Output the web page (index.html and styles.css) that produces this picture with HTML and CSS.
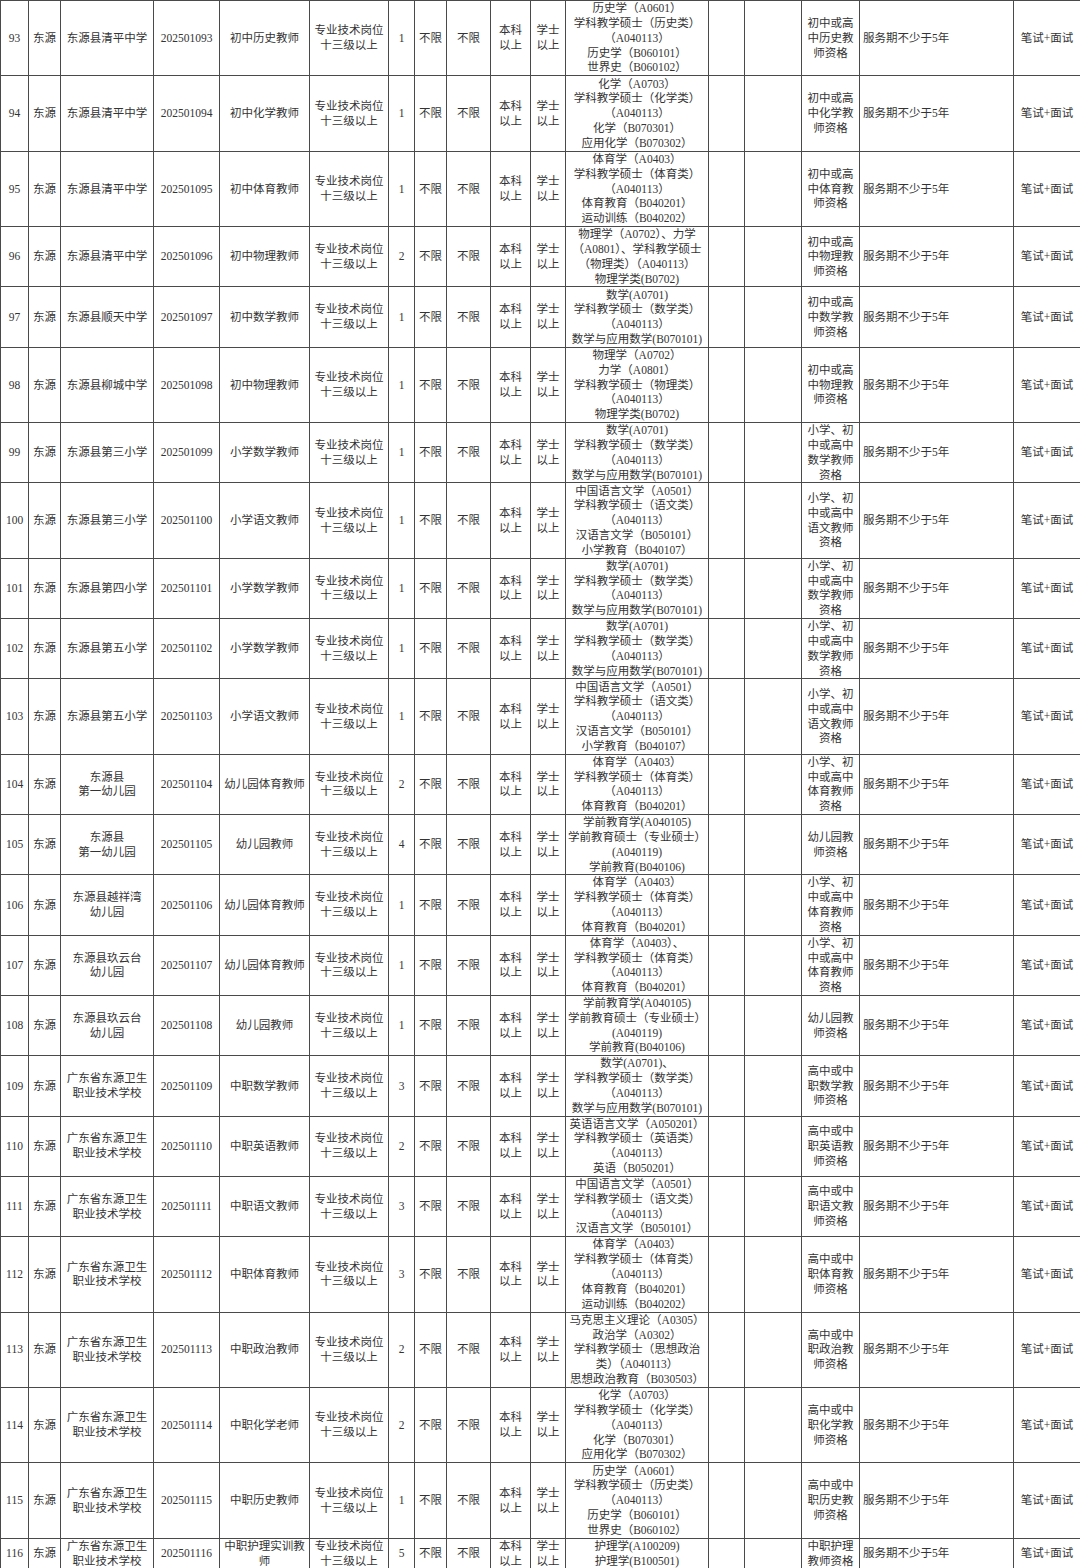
FILE: index.html
```html
<!DOCTYPE html>
<html lang="zh-CN">
<head>
<meta charset="utf-8">
<title>岗位表</title>
<link rel="stylesheet" href="styles.css">
</head>
<body>
<table class="jobs">
<colgroup>
<col class="c-no"><col class="c-area"><col class="c-unit"><col class="c-code"><col class="c-name"><col class="c-type"><col class="c-num"><col class="c-age"><col class="c-sex"><col class="c-edu"><col class="c-deg"><col class="c-major"><col class="c-e1"><col class="c-e2"><col class="c-qual"><col class="c-other"><col class="c-exam">
</colgroup>
<tbody>
<tr class="r5"><td>93</td><td>东源</td><td>东源县清平中学</td><td>202501093</td><td>初中历史教师</td><td>专业技术岗位<br>十三级以上</td><td>1</td><td>不限</td><td>不限</td><td>本科<br>以上</td><td>学士<br>以上</td><td class="major">历史学（A0601）<br>学科教学硕士（历史类）<br>（A040113）<br>历史学（B060101）<br>世界史（B060102）</td><td></td><td></td><td>初中或高<br>中历史教<br>师资格</td><td class="svc">服务期不少于5年</td><td>笔试+面试</td></tr>
<tr class="r5"><td>94</td><td>东源</td><td>东源县清平中学</td><td>202501094</td><td>初中化学教师</td><td>专业技术岗位<br>十三级以上</td><td>1</td><td>不限</td><td>不限</td><td>本科<br>以上</td><td>学士<br>以上</td><td class="major">化学（A0703）<br>学科教学硕士（化学类）<br>（A040113）<br>化学（B070301）<br>应用化学（B070302）</td><td></td><td></td><td>初中或高<br>中化学教<br>师资格</td><td class="svc">服务期不少于5年</td><td>笔试+面试</td></tr>
<tr class="r5"><td>95</td><td>东源</td><td>东源县清平中学</td><td>202501095</td><td>初中体育教师</td><td>专业技术岗位<br>十三级以上</td><td>1</td><td>不限</td><td>不限</td><td>本科<br>以上</td><td>学士<br>以上</td><td class="major">体育学（A0403）<br>学科教学硕士（体育类）<br>（A040113）<br>体育教育（B040201）<br>运动训练（B040202）</td><td></td><td></td><td>初中或高<br>中体育教<br>师资格</td><td class="svc">服务期不少于5年</td><td>笔试+面试</td></tr>
<tr class="r4"><td>96</td><td>东源</td><td>东源县清平中学</td><td>202501096</td><td>初中物理教师</td><td>专业技术岗位<br>十三级以上</td><td>2</td><td>不限</td><td>不限</td><td>本科<br>以上</td><td>学士<br>以上</td><td class="major">物理学（A0702）、力学<br>（A0801）、学科教学硕士<br>（物理类）（A040113）<br>物理学类(B0702)</td><td></td><td></td><td>初中或高<br>中物理教<br>师资格</td><td class="svc">服务期不少于5年</td><td>笔试+面试</td></tr>
<tr class="r4"><td>97</td><td>东源</td><td>东源县顺天中学</td><td>202501097</td><td>初中数学教师</td><td>专业技术岗位<br>十三级以上</td><td>1</td><td>不限</td><td>不限</td><td>本科<br>以上</td><td>学士<br>以上</td><td class="major">数学(A0701)<br>学科教学硕士（数学类）<br>（A040113）<br>数学与应用数学(B070101)</td><td></td><td></td><td>初中或高<br>中数学教<br>师资格</td><td class="svc">服务期不少于5年</td><td>笔试+面试</td></tr>
<tr class="r5"><td>98</td><td>东源</td><td>东源县柳城中学</td><td>202501098</td><td>初中物理教师</td><td>专业技术岗位<br>十三级以上</td><td>1</td><td>不限</td><td>不限</td><td>本科<br>以上</td><td>学士<br>以上</td><td class="major">物理学（A0702）<br>力学（A0801）<br>学科教学硕士（物理类）<br>（A040113）<br>物理学类(B0702)</td><td></td><td></td><td>初中或高<br>中物理教<br>师资格</td><td class="svc">服务期不少于5年</td><td>笔试+面试</td></tr>
<tr class="r4"><td>99</td><td>东源</td><td>东源县第三小学</td><td>202501099</td><td>小学数学教师</td><td>专业技术岗位<br>十三级以上</td><td>1</td><td>不限</td><td>不限</td><td>本科<br>以上</td><td>学士<br>以上</td><td class="major">数学(A0701)<br>学科教学硕士（数学类）<br>（A040113）<br>数学与应用数学(B070101)</td><td></td><td></td><td>小学、初<br>中或高中<br>数学教师<br>资格</td><td class="svc">服务期不少于5年</td><td>笔试+面试</td></tr>
<tr class="r5"><td>100</td><td>东源</td><td>东源县第三小学</td><td>202501100</td><td>小学语文教师</td><td>专业技术岗位<br>十三级以上</td><td>1</td><td>不限</td><td>不限</td><td>本科<br>以上</td><td>学士<br>以上</td><td class="major">中国语言文学（A0501）<br>学科教学硕士（语文类）<br>（A040113）<br>汉语言文学（B050101）<br>小学教育（B040107）</td><td></td><td></td><td>小学、初<br>中或高中<br>语文教师<br>资格</td><td class="svc">服务期不少于5年</td><td>笔试+面试</td></tr>
<tr class="r4"><td>101</td><td>东源</td><td>东源县第四小学</td><td>202501101</td><td>小学数学教师</td><td>专业技术岗位<br>十三级以上</td><td>1</td><td>不限</td><td>不限</td><td>本科<br>以上</td><td>学士<br>以上</td><td class="major">数学(A0701)<br>学科教学硕士（数学类）<br>（A040113）<br>数学与应用数学(B070101)</td><td></td><td></td><td>小学、初<br>中或高中<br>数学教师<br>资格</td><td class="svc">服务期不少于5年</td><td>笔试+面试</td></tr>
<tr class="r4"><td>102</td><td>东源</td><td>东源县第五小学</td><td>202501102</td><td>小学数学教师</td><td>专业技术岗位<br>十三级以上</td><td>1</td><td>不限</td><td>不限</td><td>本科<br>以上</td><td>学士<br>以上</td><td class="major">数学(A0701)<br>学科教学硕士（数学类）<br>（A040113）<br>数学与应用数学(B070101)</td><td></td><td></td><td>小学、初<br>中或高中<br>数学教师<br>资格</td><td class="svc">服务期不少于5年</td><td>笔试+面试</td></tr>
<tr class="r5"><td>103</td><td>东源</td><td>东源县第五小学</td><td>202501103</td><td>小学语文教师</td><td>专业技术岗位<br>十三级以上</td><td>1</td><td>不限</td><td>不限</td><td>本科<br>以上</td><td>学士<br>以上</td><td class="major">中国语言文学（A0501）<br>学科教学硕士（语文类）<br>（A040113）<br>汉语言文学（B050101）<br>小学教育（B040107）</td><td></td><td></td><td>小学、初<br>中或高中<br>语文教师<br>资格</td><td class="svc">服务期不少于5年</td><td>笔试+面试</td></tr>
<tr class="r4"><td>104</td><td>东源</td><td>东源县<br>第一幼儿园</td><td>202501104</td><td>幼儿园体育教师</td><td>专业技术岗位<br>十三级以上</td><td>2</td><td>不限</td><td>不限</td><td>本科<br>以上</td><td>学士<br>以上</td><td class="major">体育学（A0403）<br>学科教学硕士（体育类）<br>（A040113）<br>体育教育（B040201）</td><td></td><td></td><td>小学、初<br>中或高中<br>体育教师<br>资格</td><td class="svc">服务期不少于5年</td><td>笔试+面试</td></tr>
<tr class="r4"><td>105</td><td>东源</td><td>东源县<br>第一幼儿园</td><td>202501105</td><td>幼儿园教师</td><td>专业技术岗位<br>十三级以上</td><td>4</td><td>不限</td><td>不限</td><td>本科<br>以上</td><td>学士<br>以上</td><td class="major">学前教育学(A040105)<br>学前教育硕士（专业硕士）<br>(A040119)<br>学前教育(B040106)</td><td></td><td></td><td>幼儿园教<br>师资格</td><td class="svc">服务期不少于5年</td><td>笔试+面试</td></tr>
<tr class="r4"><td>106</td><td>东源</td><td>东源县越祥湾<br>幼儿园</td><td>202501106</td><td>幼儿园体育教师</td><td>专业技术岗位<br>十三级以上</td><td>1</td><td>不限</td><td>不限</td><td>本科<br>以上</td><td>学士<br>以上</td><td class="major">体育学（A0403）<br>学科教学硕士（体育类）<br>（A040113）<br>体育教育（B040201）</td><td></td><td></td><td>小学、初<br>中或高中<br>体育教师<br>资格</td><td class="svc">服务期不少于5年</td><td>笔试+面试</td></tr>
<tr class="r4"><td>107</td><td>东源</td><td>东源县玖云台<br>幼儿园</td><td>202501107</td><td>幼儿园体育教师</td><td>专业技术岗位<br>十三级以上</td><td>1</td><td>不限</td><td>不限</td><td>本科<br>以上</td><td>学士<br>以上</td><td class="major">体育学（A0403）、<br>学科教学硕士（体育类）<br>（A040113）<br>体育教育（B040201）</td><td></td><td></td><td>小学、初<br>中或高中<br>体育教师<br>资格</td><td class="svc">服务期不少于5年</td><td>笔试+面试</td></tr>
<tr class="r4"><td>108</td><td>东源</td><td>东源县玖云台<br>幼儿园</td><td>202501108</td><td>幼儿园教师</td><td>专业技术岗位<br>十三级以上</td><td>1</td><td>不限</td><td>不限</td><td>本科<br>以上</td><td>学士<br>以上</td><td class="major">学前教育学(A040105)<br>学前教育硕士（专业硕士）<br>(A040119)<br>学前教育(B040106)</td><td></td><td></td><td>幼儿园教<br>师资格</td><td class="svc">服务期不少于5年</td><td>笔试+面试</td></tr>
<tr class="r4"><td>109</td><td>东源</td><td>广东省东源卫生<br>职业技术学校</td><td>202501109</td><td>中职数学教师</td><td>专业技术岗位<br>十三级以上</td><td>3</td><td>不限</td><td>不限</td><td>本科<br>以上</td><td>学士<br>以上</td><td class="major">数学(A0701)、<br>学科教学硕士（数学类）<br>（A040113）<br>数学与应用数学(B070101)</td><td></td><td></td><td>高中或中<br>职数学教<br>师资格</td><td class="svc">服务期不少于5年</td><td>笔试+面试</td></tr>
<tr class="r4"><td>110</td><td>东源</td><td>广东省东源卫生<br>职业技术学校</td><td>202501110</td><td>中职英语教师</td><td>专业技术岗位<br>十三级以上</td><td>2</td><td>不限</td><td>不限</td><td>本科<br>以上</td><td>学士<br>以上</td><td class="major">英语语言文学（A050201）<br>学科教学硕士（英语类）<br>（A040113）<br>英语（B050201）</td><td></td><td></td><td>高中或中<br>职英语教<br>师资格</td><td class="svc">服务期不少于5年</td><td>笔试+面试</td></tr>
<tr class="r4"><td>111</td><td>东源</td><td>广东省东源卫生<br>职业技术学校</td><td>202501111</td><td>中职语文教师</td><td>专业技术岗位<br>十三级以上</td><td>3</td><td>不限</td><td>不限</td><td>本科<br>以上</td><td>学士<br>以上</td><td class="major">中国语言文学（A0501）<br>学科教学硕士（语文类）<br>（A040113）<br>汉语言文学（B050101）</td><td></td><td></td><td>高中或中<br>职语文教<br>师资格</td><td class="svc">服务期不少于5年</td><td>笔试+面试</td></tr>
<tr class="r5"><td>112</td><td>东源</td><td>广东省东源卫生<br>职业技术学校</td><td>202501112</td><td>中职体育教师</td><td>专业技术岗位<br>十三级以上</td><td>3</td><td>不限</td><td>不限</td><td>本科<br>以上</td><td>学士<br>以上</td><td class="major">体育学（A0403）<br>学科教学硕士（体育类）<br>（A040113）<br>体育教育（B040201）<br>运动训练（B040202）</td><td></td><td></td><td>高中或中<br>职体育教<br>师资格</td><td class="svc">服务期不少于5年</td><td>笔试+面试</td></tr>
<tr class="r5"><td>113</td><td>东源</td><td>广东省东源卫生<br>职业技术学校</td><td>202501113</td><td>中职政治教师</td><td>专业技术岗位<br>十三级以上</td><td>2</td><td>不限</td><td>不限</td><td>本科<br>以上</td><td>学士<br>以上</td><td class="major">马克思主义理论（A0305）<br>政治学（A0302）<br>学科教学硕士（思想政治<br>类）（A040113）<br>思想政治教育（B030503）</td><td></td><td></td><td>高中或中<br>职政治教<br>师资格</td><td class="svc">服务期不少于5年</td><td>笔试+面试</td></tr>
<tr class="r5"><td>114</td><td>东源</td><td>广东省东源卫生<br>职业技术学校</td><td>202501114</td><td>中职化学老师</td><td>专业技术岗位<br>十三级以上</td><td>2</td><td>不限</td><td>不限</td><td>本科<br>以上</td><td>学士<br>以上</td><td class="major">化学（A0703）<br>学科教学硕士（化学类）<br>（A040113）<br>化学（B070301）<br>应用化学（B070302）</td><td></td><td></td><td>高中或中<br>职化学教<br>师资格</td><td class="svc">服务期不少于5年</td><td>笔试+面试</td></tr>
<tr class="r5"><td>115</td><td>东源</td><td>广东省东源卫生<br>职业技术学校</td><td>202501115</td><td>中职历史教师</td><td>专业技术岗位<br>十三级以上</td><td>1</td><td>不限</td><td>不限</td><td>本科<br>以上</td><td>学士<br>以上</td><td class="major">历史学（A0601）<br>学科教学硕士（历史类）<br>（A040113）<br>历史学（B060101）<br>世界史（B060102）</td><td></td><td></td><td>高中或中<br>职历史教<br>师资格</td><td class="svc">服务期不少于5年</td><td>笔试+面试</td></tr>
<tr class="r2"><td>116</td><td>东源</td><td>广东省东源卫生<br>职业技术学校</td><td>202501116</td><td>中职护理实训教<br>师</td><td>专业技术岗位<br>十三级以上</td><td>5</td><td>不限</td><td>不限</td><td>本科<br>以上</td><td>学士<br>以上</td><td class="major">护理学(A100209)<br>护理学(B100501)</td><td></td><td></td><td>中职护理<br>教师资格</td><td class="svc">服务期不少于5年</td><td>笔试+面试</td></tr>
</tbody>
</table>
</body>
</html>
```

FILE: styles.css
```css
html, body {
  margin: 0;
  padding: 0;
  background: #ffffff;
}

body {
  width: 1080px;
  height: 1568px;
  overflow: hidden;
}

.jobs {
  width: 1080px;
  table-layout: fixed;
  border-collapse: collapse;
  font-family: "Liberation Serif", "Noto Sans CJK SC", serif;
  font-size: 11.5px;
  line-height: 14.8px;
  color: #333333;
}

.jobs td {
  border: 1px solid #4a4a4a;
  padding: 0;
  text-align: center;
  vertical-align: middle;
  white-space: nowrap;
  overflow: hidden;
}

.jobs td.svc {
  text-align: left;
  padding-left: 3px;
}

.r5 { height: 75.4px; }
.r4 { height: 60.3px; }
.r2 { height: 29px; }

.c-no { width: 28px; }
.c-area { width: 32px; }
.c-unit { width: 93px; }
.c-code { width: 66px; }
.c-name { width: 90px; }
.c-type { width: 79px; }
.c-num { width: 26px; }
.c-age { width: 32px; }
.c-sex { width: 44px; }
.c-edu { width: 40px; }
.c-deg { width: 35px; }
.c-major { width: 143px; }
.c-e1 { width: 36px; }
.c-e2 { width: 57px; }
.c-qual { width: 58px; }
.c-other { width: 154px; }
.c-exam { width: 67px; }
```
